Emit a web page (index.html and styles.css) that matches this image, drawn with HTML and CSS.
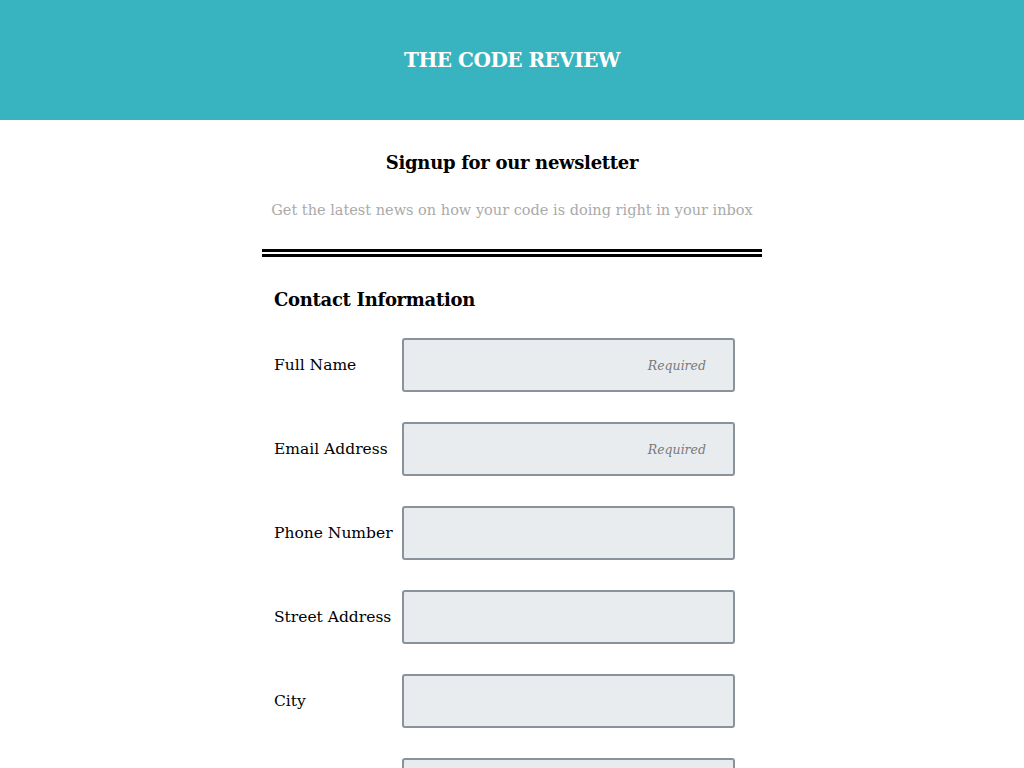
FILE: index.html
```html
<!DOCTYPE html>
<html>
<head>
<meta charset="utf-8">
<link rel="stylesheet" href="styles.css">
</head>
<body>
<header class="site-header">
  <h1 class="site-title">THE CODE REVIEW</h1>
</header>
<main class="container">
  <h2 class="signup-title">Signup for our newsletter</h2>
  <p class="signup-sub">Get the latest news on how your code is doing right in your inbox</p>
  <div class="double-rule"></div>
  <form class="form">
    <h3 class="section-title">Contact Information</h3>
    <div class="row"><label class="label">Full Name</label><input class="field" type="text" placeholder="Required"></div>
    <div class="row"><label class="label">Email Address</label><input class="field" type="text" placeholder="Required"></div>
    <div class="row"><label class="label">Phone Number</label><input class="field" type="text"></div>
    <div class="row"><label class="label">Street Address</label><input class="field" type="text"></div>
    <div class="row"><label class="label">City</label><input class="field" type="text"></div>
    <div class="row"><label class="label">State</label><input class="field" type="text"></div>
  </form>
</main>
</body>
</html>
```

FILE: styles.css
```css
* { box-sizing: border-box; }
html, body { margin: 0; padding: 0; }
body {
  font-family: "DejaVu Serif", "Liberation Serif", serif;
  color: #000;
  background: #fff;
}
.site-header {
  height: 120px;
  background: #38b4c0;
  display: flex;
  align-items: center;
  justify-content: center;
}
.site-title {
  margin: 0;
  color: #fff;
  font-size: 20px;
  font-weight: bold;
  letter-spacing: -0.5px;
}
.container {
  width: 500px;
  margin: 0 auto;
}
.signup-title {
  margin: 29px 0 0;
  text-align: center;
  font-size: 18px;
  line-height: 28px;
  font-weight: bold;
  letter-spacing: -0.3px;
}
.signup-sub {
  margin: 23px 0 0;
  text-align: center;
  color: #aaaaaa;
  font-size: 14.5px;
  line-height: 20px;
}
.double-rule {
  margin-top: 29px;
  height: 8px;
  border-top: 3px solid #000;
  border-bottom: 3px solid #000;
}
.form {
  padding: 0 12px;
}
.section-title {
  margin: 30px 0 0;
  font-size: 18px;
  line-height: 26px;
  font-weight: bold;
  letter-spacing: -0.3px;
}
.row {
  display: flex;
  align-items: center;
  margin-top: 25px;
}
.row + .row { margin-top: 30px; }
.label {
  width: 128px;
  flex: none;
  font-size: 15.5px;
}
.field {
  width: 333px;
  height: 54px;
  border: 2px solid #8a939b;
  border-radius: 3px;
  background: #e8ecef;
  padding: 0 27px 0 12px;
  font-family: inherit;
  font-size: 14px;
  text-align: right;
  outline: none;
}
.field::placeholder {
  color: #7a7a7a;
  font-style: italic;
  font-size: 12.5px;
}
```
